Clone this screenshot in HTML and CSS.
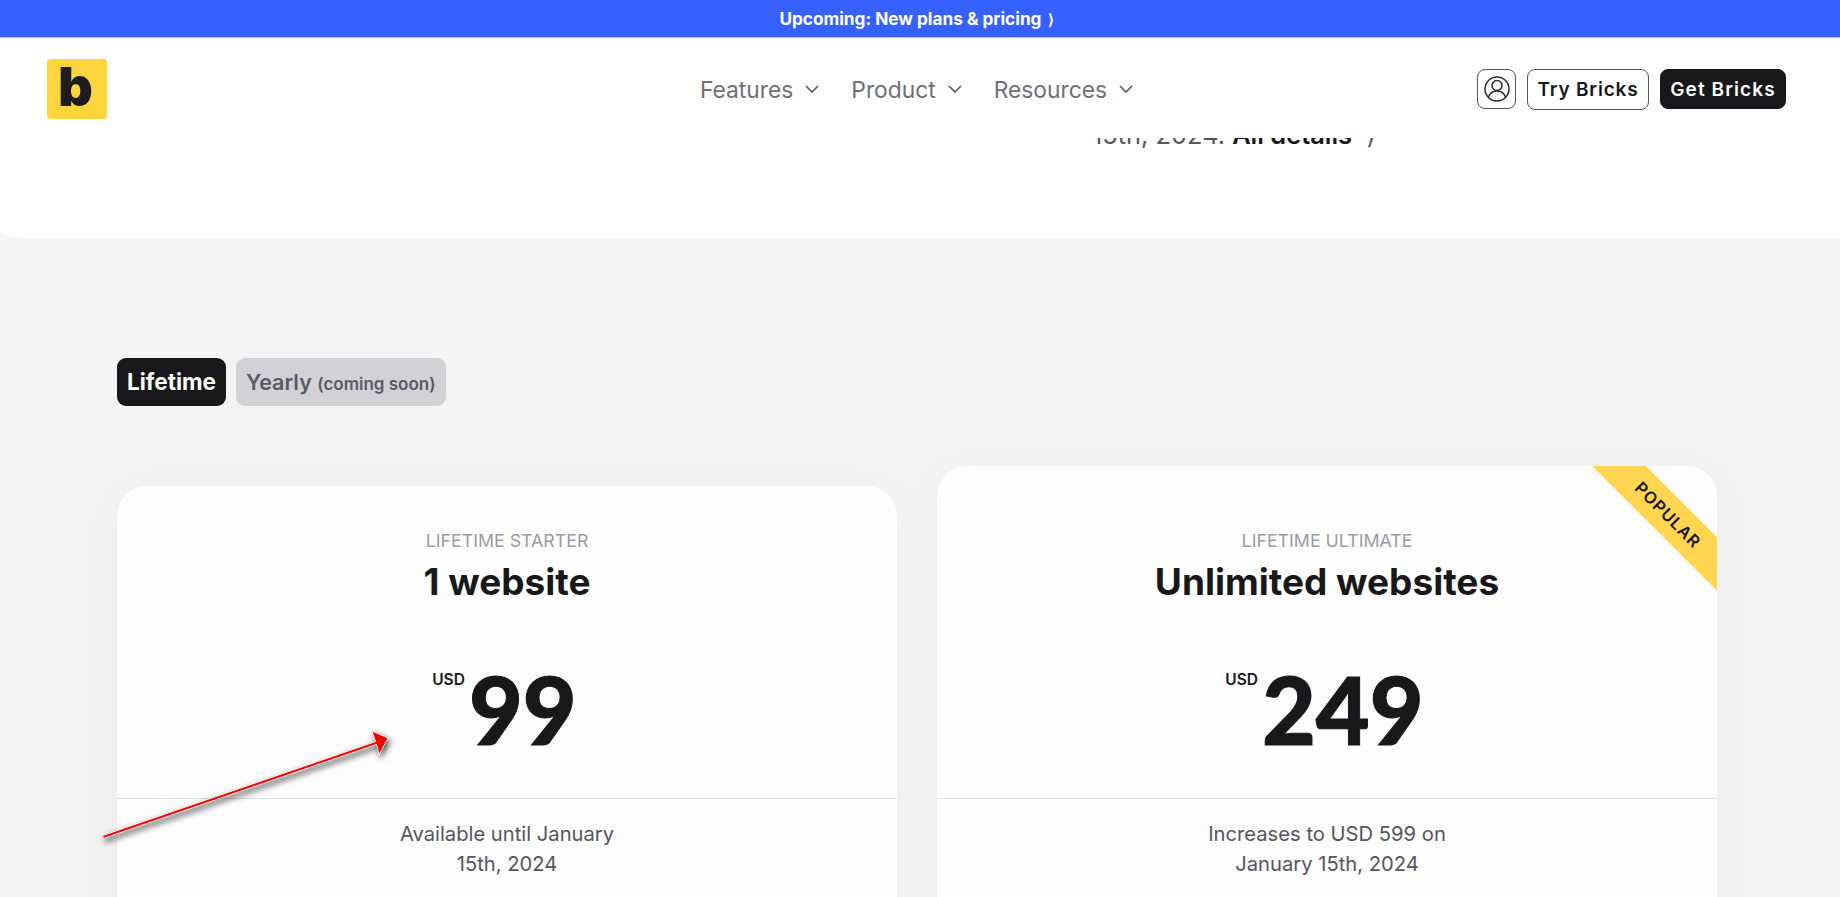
FILE: index.html
```html
<!DOCTYPE html>
<html>

<head>
    <meta charset="utf-8">
    <title>Bricks pricing</title>
    <link rel="stylesheet" href="styles.css">
</head>

<body>
    <div class="page">
        <div class="banner">Upcoming: New plans &amp; pricing <span class="banner-arrow">&#x27E9;</span></div>

        <header class="header">
            <div class="logo">b</div>
            <nav class="nav">
                <a class="nav-item">Features <svg class="chev" viewBox="0 0 14 8"><path d="M1 1l6 6 6-6"/></svg></a>
                <a class="nav-item">Product <svg class="chev" viewBox="0 0 14 8"><path d="M1 1l6 6 6-6"/></svg></a>
                <a class="nav-item">Resources <svg class="chev" viewBox="0 0 14 8"><path d="M1 1l6 6 6-6"/></svg></a>
            </nav>
            <div class="actions">
                <a class="btn btn-icon">
                    <svg viewBox="0 0 26 30" width="26" height="30">
                        <circle cx="13" cy="15" r="12"/>
                        <circle cx="13" cy="11.500" r="5"/>
                        <path d="M4.500 23c1.500-4 4.500-6 8.500-6s7 2 8.500 6"/>
                    </svg>
                </a>
                <a class="btn btn-outline">Try Bricks</a>
                <a class="btn btn-dark">Get Bricks</a>
            </div>
        </header>

        <section class="hero">
            <p class="hero-line">15th, 2024. <strong>All details</strong> &nbsp;&#x27E9;</p>
        </section>

        <main class="pricing">
            <div class="tabs">
                <div class="tab tab-active">Lifetime</div>
                <div class="tab">Yearly <small>(coming soon)</small></div>
            </div>

            <div class="cards">
                <div class="card">
                    <div class="card-label">LIFETIME STARTER</div>
                    <h2 class="card-title">1 website</h2>
                    <div class="price"><span class="currency">USD</span><span class="amount">99</span></div>
                    <div class="card-note">Available until January<br>15th, 2024</div>
                </div>
                <div class="card card-popular">
                    <div class="ribbon">POPULAR</div>
                    <div class="card-label">LIFETIME ULTIMATE</div>
                    <h2 class="card-title">Unlimited websites</h2>
                    <div class="price"><span class="currency">USD</span><span class="amount">249</span></div>
                    <div class="card-note">Increases to USD 599 on<br>January 15th, 2024</div>
                </div>
            </div>
        </main>

        <!-- arrow drawn over the screenshot -->
        <svg class="annotation" viewBox="0 0 310 120" width="310" height="120">
            <path class="arrow" d="M7.500 110.600L280.500 16.600L277 6L293 13L284 30L281.500 19.400L8.500 113.400Z"/>
        </svg>
    </div>
</body>

</html>
```

FILE: styles.css
```css
* {
    box-sizing: border-box;
}

body {
    margin: 0;
    font-family: Inter, "Noto Sans", sans-serif;
    background-color: #f4f4f4;
    color: #18181b;
}

.page {
    position: relative;
    height: 897px;
    overflow: hidden;
}

.banner {
    height: 38px;
    padding-bottom: 1px;
    padding-right: 7px;
    border-bottom: 1px solid #b4c6ff;
    background-color: #3761ff;
    color: white;
    font-size: 17.200px;
    font-weight: 700;
    line-height: 37px;
    text-align: center;
}

.banner-arrow {
    margin-left: 2px;
    font-size: 15px;
}

.header {
    display: flex;
    align-items: center;
    height: 100px;
    padding: 2px 54px 0 47px;
    background-color: white;
}

.logo {
    width: 60px;
    height: 60px;
    padding-right: 3px;
    border-radius: 4px;
    background-color: #ffd53e;
    color: #1d1d1f;
    font-size: 54px;
    font-weight: 900;
    line-height: 56px;
    text-align: center;
}

.nav {
    display: flex;
    gap: 32px;
    margin-left: 593px;
}

.nav-item {
    display: flex;
    align-items: center;
    gap: 12px;
    color: #6f6f79;
    font-size: 22.800px;
}

.chev {
    width: 14px;
    height: 8px;
    fill: none;
    stroke: #5b5b63;
    stroke-width: 1.700;
}

.actions {
    display: flex;
    align-items: center;
    gap: 11px;
    margin-left: auto;
}

.btn {
    display: flex;
    align-items: center;
    justify-content: center;
    height: 40px;
    border: 1px solid #55555a;
    border-radius: 8px;
    font-size: 19px;
    font-weight: 600;
    letter-spacing: 0.8px;
}

.btn-icon {
    width: 39px;
}

.btn-icon svg {
    fill: none;
    stroke: #2a2a2e;
    stroke-width: 1.500;
}

.btn-outline {
    width: 122px;
    height: 41px;
}

.btn-dark {
    width: 126px;
    background-color: #18181a;
    border-color: #18181a;
    color: white;
    letter-spacing: 1.100px;
}

.hero {
    height: 100px;
    overflow: hidden;
    padding-left: 1092px;
    background-color: white;
    border-bottom-left-radius: 30px 7px;
}

.hero-line {
    margin: -18px 0 0;
    color: #55555f;
    font-size: 25.400px;
    line-height: 30px;
}

.hero-line strong {
    color: #18181b;
    font-weight: 600;
}

.pricing {
    padding: 120px 123px 0 117px;
}

.tabs {
    display: flex;
    gap: 10px;
}

.tab {
    height: 48px;
    padding: 0 10px;
    border-radius: 9px;
    background-color: #d2d1d6;
    color: #5a5a66;
    font-size: 21.500px;
    font-weight: 600;
    line-height: 48px;
}

.tab small {
    font-size: 17px;
}

.tab-active {
    background-color: #18181b;
    color: white;
    font-size: 22.500px;
    font-weight: 700;
}

.cards {
    display: grid;
    grid-template-columns: 780px 780px;
    gap: 40px;
    align-items: end;
    margin-top: 60px;
}

.card {
    position: relative;
    overflow: hidden;
    padding-top: 43px;
    padding-bottom: 60px;
    border-radius: 30px 30px 0 0;
    background-color: #fdfdfd;
    box-shadow: 0 10px 50px rgba(0, 0, 0, 0.04);
    text-align: center;
}

.card-popular {
    padding-top: 63px;
}

.card-label {
    color: #9b9ba3;
    font-size: 17.800px;
    line-height: 24px;
}

.card-title {
    margin: 4px 0 0;
    font-size: 37px;
    font-weight: 700;
    line-height: 50px;
}

.price {
    display: flex;
    justify-content: center;
    height: 192px;
    padding-top: 57px;
    padding-right: 5px;
    border-bottom: 1px solid #e0e0e2;
}

.currency {
    margin-top: 7px;
    margin-right: 4px;
    font-size: 15.500px;
    font-weight: 600;
    line-height: 18px;
}

.amount {
    font-family: Lato, Inter, sans-serif;
    font-size: 93px;
    font-weight: 900;
    line-height: 90px;
    -webkit-text-stroke: 1px #18181b;
}

.card-note {
    padding-top: 20px;
    color: #55555f;
    font-size: 20.200px;
    line-height: 30px;
}

.ribbon {
    position: absolute;
    top: 30px;
    right: -51px;
    width: 200px;
    height: 38px;
    background-color: #ffd552;
    font-size: 16.500px;
    font-weight: 600;
    line-height: 38px;
    letter-spacing: 1px;
    text-align: center;
    transform: rotate(45deg);
}

.annotation {
    position: absolute;
    top: 725px;
    left: 95px;
    filter: drop-shadow(2px 3px 3px rgba(0, 0, 0, 0.7));
}

.arrow {
    fill: #f00;
    stroke: #eee;
    stroke-width: 1;
}
```
